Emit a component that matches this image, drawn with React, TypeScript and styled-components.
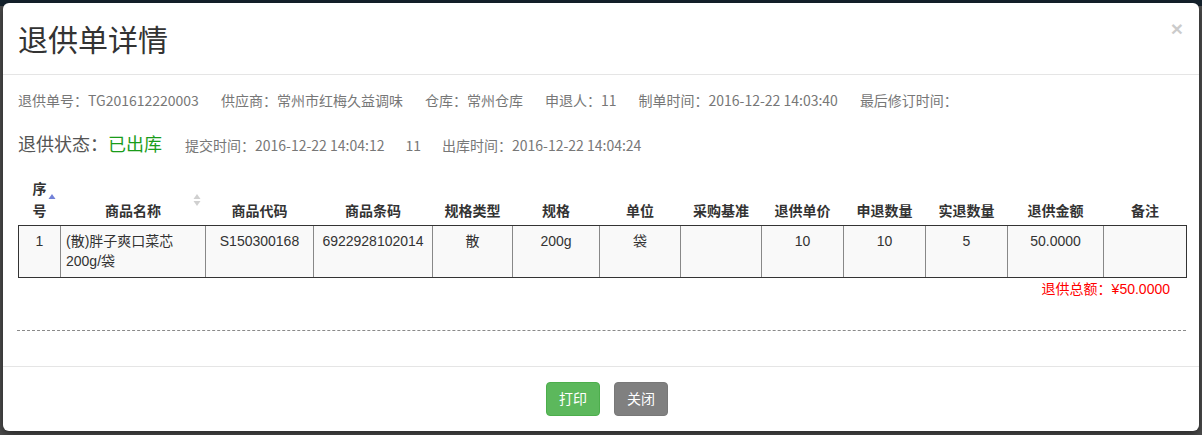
import React from 'react';
import styled, { createGlobalStyle } from 'styled-components';

const FONT = `"Liberation Sans", "Noto Sans CJK SC", sans-serif`;
const INFO_FONT = `"Noto Sans CJK SC", sans-serif`;

const Global = createGlobalStyle`
  html, body { margin: 0; padding: 0; }
  body {
    height: 435px;
    overflow: hidden;
    background: linear-gradient(#15222d 0, #15222d 6px, #4d4d4d 6px);
    font-family: ${FONT};
  }
`;

const Backdrop = styled.div`
  padding: 3px;
`;

const Modal = styled.div`
  width: 1196px;
  height: 428px;
  background: #fff;
  border-radius: 6px;
  box-shadow: 0 3px 9px rgba(0, 0, 0, 0.5);
  display: flex;
  flex-direction: column;
  overflow: hidden;
`;

const Header = styled.div`
  height: 72px;
  box-sizing: border-box;
  padding: 15px 16px 0 15px;
  border-bottom: 1px solid #e5e5e5;
  display: flex;
  justify-content: space-between;
  align-items: flex-start;
`;

const Title = styled.h4`
  margin: 2px 0 0;
  font-size: 30px;
  line-height: 42px;
  font-weight: normal;
  color: #333;
`;

const Close = styled.button`
  border: 0;
  background: transparent;
  padding: 0;
  font-family: ${FONT};
  font-size: 21px;
  font-weight: bold;
  line-height: 21px;
  color: #000;
  opacity: 0.2;
  cursor: pointer;
`;

const Body = styled.div`
  flex: 1;
  padding: 15px 15px 0;
`;

const InfoLine = styled.div`
  display: flex;
  gap: 22px;
  font-family: ${INFO_FONT};
  font-size: 14px;
  line-height: 20px;
  color: #777;
`;

const StatusLine = styled.div`
  display: flex;
  align-items: baseline;
  gap: 21px;
  margin-top: 20px;
  font-family: ${INFO_FONT};
  font-size: 14px;
  line-height: 20px;
  color: #777;
`;

const StatusLabel = styled.span`
  font-size: 18px;
  line-height: 26px;
  color: #555;
  margin-right: 2px;
`;

const StatusValue = styled.span`
  color: #1a9c1a;
`;

const Table = styled.table`
  margin-top: 18px;
  width: 1168px;
  table-layout: fixed;
  border-collapse: collapse;
  font-size: 14px;
  color: #333;
`;

const Th = styled.th`
  position: relative;
  padding: 4px 8px 3px;
  line-height: 22px;
  font-weight: bold;
  text-align: center;
  vertical-align: bottom;
  border-bottom: 1px solid #333;
`;

const SortIcon = styled.svg`
  position: absolute;
  right: 5px;
  top: 50%;
  transform: translateY(-50%);
`;

const Row = styled.tr`
  background: #f9f9f9;
`;

const Td = styled.td<{ $align?: string }>`
  height: 40px;
  padding: 5px 5px 6px;
  line-height: 20px;
  text-align: ${(p) => p.$align || 'center'};
  vertical-align: top;
  border: 1px solid #888;
  border-bottom-color: #333;
  &:first-child { border-left-color: #333; }
  &:last-child { border-right-color: #333; }
`;

const Total = styled.div`
  width: 1168px;
  text-align: right;
  box-sizing: border-box;
  padding: 1px 16px 0 0;
  font-size: 14px;
  line-height: 20px;
  color: #f00;
`;

const Dashed = styled.div`
  margin: 31px 0 0 -1px;
  width: 1169px;
  border-top: 1px dashed #8a8a8a;
`;

const Footer = styled.div`
  border-top: 1px solid #e5e5e5;
  padding: 15px 15px 15px 27px;
  display: flex;
  justify-content: center;
  gap: 14px;
`;

const Button = styled.button<{ $variant: 'print' | 'close' }>`
  height: 34px;
  padding: 6px 12px;
  font-family: ${FONT};
  font-size: 14px;
  line-height: 20px;
  color: #fff;
  border-radius: 4px;
  border: 1px solid ${(p) => (p.$variant === 'print' ? '#4cae4c' : '#787878')};
  background: ${(p) => (p.$variant === 'print' ? '#5cb85c' : '#808080')};
  cursor: pointer;
`;

const cols = [42, 145, 108, 119, 80, 87, 81, 81, 82, 82, 82, 96, 83];
const heads = ['序号', '商品名称', '商品代码', '商品条码', '规格类型', '规格', '单位', '采购基准', '退供单价', '申退数量', '实退数量', '退供金额', '备注'];

const AscIcon = () => (
  <SortIcon width="8" height="14" viewBox="0 0 8 14">
    <path d="M4 1 L7.5 6 L0.5 6 Z" fill="#7281d8" />
  </SortIcon>
);

const BothIcon = () => (
  <SortIcon width="8" height="14" viewBox="0 0 8 14">
    <path d="M4 1 L7.5 6 L0.5 6 Z" fill="#d0d0d0" />
    <path d="M4 13 L7.5 8 L0.5 8 Z" fill="#d0d0d0" />
  </SortIcon>
);

export default function App() {
  return (
    <>
      <Global />
      <Backdrop>
        <Modal>
          <Header>
            <Title>退供单详情</Title>
            <Close aria-label="close">×</Close>
          </Header>
          <Body>
            <InfoLine>
              <span>退供单号：TG201612220003</span>
              <span>供应商：常州市红梅久益调味</span>
              <span>仓库：常州仓库</span>
              <span>申退人：11</span>
              <span>制单时间：2016-12-22 14:03:40</span>
              <span>最后修订时间：</span>
            </InfoLine>
            <StatusLine>
              <StatusLabel>
                退供状态：<StatusValue>已出库</StatusValue>
              </StatusLabel>
              <span>提交时间：2016-12-22 14:04:12</span>
              <span>11</span>
              <span>出库时间：2016-12-22 14:04:24</span>
            </StatusLine>
            <Table>
              <colgroup>
                {cols.map((w, i) => (
                  <col key={i} style={{ width: w }} />
                ))}
              </colgroup>
              <thead>
                <tr>
                  {heads.map((h, i) => (
                    <Th key={h}>
                      {h}
                      {i === 0 && <AscIcon />}
                      {i === 1 && <BothIcon />}
                    </Th>
                  ))}
                </tr>
              </thead>
              <tbody>
                <Row>
                  <Td>1</Td>
                  <Td $align="left">
                    (散)胖子爽口菜芯
                    <br />
                    200g/袋
                  </Td>
                  <Td>S150300168</Td>
                  <Td>6922928102014</Td>
                  <Td>散</Td>
                  <Td>200g</Td>
                  <Td>袋</Td>
                  <Td></Td>
                  <Td>10</Td>
                  <Td>10</Td>
                  <Td>5</Td>
                  <Td>50.0000</Td>
                  <Td></Td>
                </Row>
              </tbody>
            </Table>
            <Total>退供总额：¥50.0000</Total>
            <Dashed />
          </Body>
          <Footer>
            <Button $variant="print">打印</Button>
            <Button $variant="close">关闭</Button>
          </Footer>
        </Modal>
      </Backdrop>
    </>
  );
}
